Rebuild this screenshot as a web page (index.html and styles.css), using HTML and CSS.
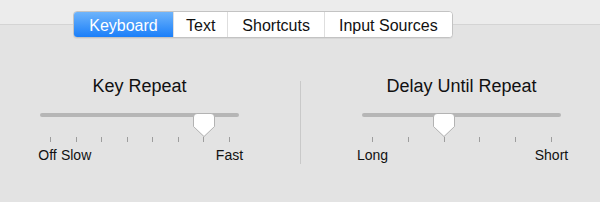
FILE: index.html
```html
<!DOCTYPE html>
<html lang="en">
<head>
    <meta charset="UTF-8">
    <title>Keyboard</title>
    <link rel="stylesheet" href="styles.css">
</head>
<body>

    <div class="tabs">
        <button class="tab tab-active">Keyboard</button>
        <button class="tab tab-text">Text</button>
        <button class="tab">Shortcuts</button>
        <button class="tab">Input Sources</button>
    </div>

    <div class="sliders">
        <div class="panel">
            <h4 class="panel-title">Key Repeat</h4>
            <div class="slider">
                <div class="track"></div>
                <svg class="thumb" style="left: 85.71%;" width="22" height="24" viewBox="0 0 22 24">
                    <path d="M4 0.5 H18 Q21.5 0.5 21.5 4 V13.5 L11 23.5 L0.5 13.5 V4 Q0.5 0.5 4 0.5 Z" />
                </svg>
            </div>
            <div class="ticks">
                <div class="tick"><span class="mark"></span><span class="label label-off">Off</span></div>
                <div class="tick"><span class="mark"></span><span class="label">Slow</span></div>
                <div class="tick"><span class="mark"></span></div>
                <div class="tick"><span class="mark"></span></div>
                <div class="tick"><span class="mark"></span></div>
                <div class="tick"><span class="mark"></span></div>
                <div class="tick"><span class="mark"></span></div>
                <div class="tick"><span class="mark"></span><span class="label">Fast</span></div>
            </div>
        </div>

        <div class="divider"></div>

        <div class="panel">
            <h4 class="panel-title">Delay Until Repeat</h4>
            <div class="slider">
                <div class="track"></div>
                <svg class="thumb" style="left: 40%;" width="22" height="24" viewBox="0 0 22 24">
                    <path d="M4 0.5 H18 Q21.5 0.5 21.5 4 V13.5 L11 23.5 L0.5 13.5 V4 Q0.5 0.5 4 0.5 Z" />
                </svg>
            </div>
            <div class="ticks">
                <div class="tick"><span class="mark"></span><span class="label">Long</span></div>
                <div class="tick"><span class="mark"></span></div>
                <div class="tick"><span class="mark"></span></div>
                <div class="tick"><span class="mark"></span></div>
                <div class="tick"><span class="mark"></span></div>
                <div class="tick"><span class="mark"></span><span class="label">Short</span></div>
            </div>
        </div>
    </div>

</body>
</html>
```

FILE: styles.css
```css
body {
    margin: 0;
    height: 202px;
    background: linear-gradient(#ececec 0 24px, #d4d4d4 24px 25px, #e3e3e3 25px);
    color: #111;
    font-family: "Liberation Sans", Arial, sans-serif;
    overflow: hidden;
}

/* segmented control */
.tabs {
    display: flex;
    width: max-content;
    margin: 11px 0 0 73px;
    border: 1px solid #c3c3c3;
    border-radius: 4px;
    background: #fff;
    box-shadow: 0 1px 0 rgba(0, 0, 0, .05);
    overflow: hidden;
}

.tab {
    font: 16px/23px "Liberation Sans", Arial, sans-serif;
    color: #111;
    background: #fff;
    border: none;
    border-left: 1px solid #dedede;
    padding: 2px 14px 0;
    margin: 0;
    height: 25px;
}

.tab:first-child {
    border-left: none;
}

.tab-text {
    padding: 2px 12px 0;
}

.tab-active {
    width: 99px;
    color: #fff;
    background: linear-gradient(#6eb4fb, #1b7ff9);
}

/* sliders */
.sliders {
    display: flex;
    margin: 37px 0 0 33px;
}

.panel {
    width: 213px;
}

.panel-title {
    margin: 0;
    font-size: 18px;
    font-weight: normal;
    line-height: 22px;
    text-align: center;
}

.divider {
    width: 1px;
    height: 83px;
    margin: 6px 54px 0;
    background: #c9c9c9;
}

.slider {
    position: relative;
    height: 24px;
    margin: 16px 16px 0 17px;
}

.track {
    height: 4px;
    margin: 7px -9px 0 -10px;
    border-radius: 2px;
    background: #b6b6b6;
}

.thumb {
    position: absolute;
    top: 0;
    transform: translateX(-50%);
    filter: drop-shadow(0 0.5px 0.5px rgba(0, 0, 0, .12));
}

.thumb path {
    fill: #fff;
    stroke: #b3b3b3;
    stroke-width: 1;
}

.ticks {
    display: flex;
    justify-content: space-between;
    margin: 0 16px 0 17px;
}

.tick {
    display: flex;
    flex-direction: column;
    align-items: center;
    width: 1px;
}

.mark {
    width: 1px;
    height: 5px;
    background: #9d9d9d;
}

.label {
    margin-top: 5px;
    font-size: 14px;
    line-height: 16px;
    white-space: nowrap;
}

.label-off {
    margin-right: 6px;
}
```
